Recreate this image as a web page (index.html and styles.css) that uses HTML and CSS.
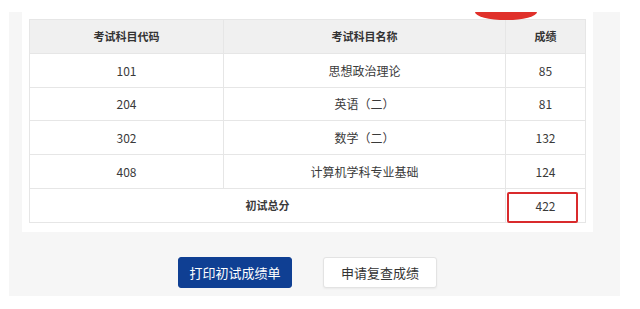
FILE: index.html
```html
<!DOCTYPE html>
<html lang="zh-CN">
<head>
<meta charset="utf-8">
<link rel="stylesheet" href="styles.css">
</head>
<body>
<div class="panel">
  <div class="mark"></div>
  <div class="card">
    <table class="scores">
      <colgroup>
        <col class="c1"><col class="c2"><col class="c3">
      </colgroup>
      <thead>
        <tr><th>考试科目代码</th><th>考试科目名称</th><th>成绩</th></tr>
      </thead>
      <tbody>
        <tr><td>101</td><td>思想政治理论</td><td>85</td></tr>
        <tr><td>204</td><td>英语（二）</td><td>81</td></tr>
        <tr><td>302</td><td>数学（二）</td><td>132</td></tr>
        <tr><td>408</td><td>计算机学科专业基础</td><td>124</td></tr>
        <tr><td colspan="2" class="total">初试总分</td><td class="sum">422<span class="hl"></span></td></tr>
      </tbody>
    </table>
  </div>
  <div class="actions">
    <button class="btn primary">打印初试成绩单</button>
    <button class="btn plain">申请复查成绩</button>
  </div>
</div>
</body>
</html>
```

FILE: styles.css
```css
html, body {
  margin: 0;
  padding: 0;
  background: #ffffff;
}
body {
  font-family: "Noto Sans CJK SC", "Noto Sans", sans-serif;
  color: #333333;
  padding-top: 12px;
}
.panel {
  position: relative;
  margin-left: 9px;
  width: 611px;
  height: 284px;
  box-sizing: border-box;
  background: #f6f6f6;
  padding: 0 27px 9px 13px;
  display: flex;
  flex-direction: column;
}
.mark {
  position: absolute;
  left: 466px;
  top: 0;
  width: 62px;
  height: 8px;
  background: #e0302a;
  border-radius: 0 0 31px 31px / 0 0 8px 8px;
  z-index: 2;
}
.card {
  background: #ffffff;
  padding: 7px 8px 9px 7px;
}
.scores {
  border-collapse: collapse;
  width: 556px;
  table-layout: fixed;
  font-size: 12px;
}
.c1 { width: 194px; }
.c2 { width: 282px; }
.c3 { width: 80px; }
.scores th, .scores td {
  border: 1px solid #e6e6e6;
  text-align: center;
  height: 33.8px;
  padding: 0;
  box-sizing: border-box;
}
.scores th {
  background: #f0f0f0;
  font-weight: bold;
  font-size: 11px;
  color: #333333;
}
.scores td {
  color: #3a3a3a;
}
.scores td.total {
  font-weight: bold;
  font-size: 11px;
}
.scores td.sum {
  position: relative;
}
.hl {
  position: absolute;
  left: 1px;
  top: 3px;
  width: 71px;
  height: 31px;
  box-sizing: border-box;
  border: 2px solid #d92a2c;
  border-radius: 2px;
}
.actions {
  margin-top: 25px;
  display: flex;
  justify-content: center;
  gap: 31px;
}
.btn {
  width: 114px;
  height: 31px;
  font-family: "Noto Sans CJK SC", "Noto Sans", sans-serif;
  font-size: 13px;
  border-radius: 3px;
  padding: 0;
  cursor: pointer;
}
.primary {
  background: #0f3f93;
  border: 1px solid #0f3f93;
  color: #ffffff;
}
.plain {
  background: #ffffff;
  border: 1px solid #e3e3e3;
  color: #333333;
  box-shadow: 0 1px 2px rgba(0,0,0,0.05);
}
```
